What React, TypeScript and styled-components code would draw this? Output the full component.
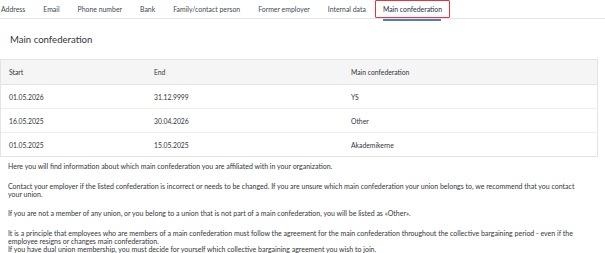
import { createGlobalStyle } from 'styled-components';
import styled from 'styled-components';

const GlobalStyle = createGlobalStyle`
  html, body {
    margin: 0;
    padding: 0;
    background: #ffffff;
  }
  body {
    font-family: Lato, "Open Sans", Arial, sans-serif;
    color: #32363a;
  }
`;

interface IPeriod {
  start: string;
  end: string;
  confederation: string;
}

const tabs = [
  'Address',
  'Email',
  'Phone number',
  'Bank',
  'Family/contact person',
  'Former employer',
  'Internal data',
  'Main confederation',
];

const periods: IPeriod[] = [
  { start: '01.05.2026', end: '31.12.9999', confederation: 'YS' },
  { start: '16.05.2025', end: '30.04.2026', confederation: 'Other' },
  { start: '01.05.2025', end: '15.05.2025', confederation: 'Akademikerne' },
];

export default function App() {
  return (
    <SPage>
      <GlobalStyle />
      <STabBar>
        {tabs.map((tab) => (
          <STab key={tab} $active={tab === 'Main confederation'}>
            {tab}
          </STab>
        ))}
      </STabBar>
      <STitle>Main confederation</STitle>
      <STable>
        <SHeadRow>
          <SCell>Start</SCell>
          <SCell>End</SCell>
          <SCell>Main confederation</SCell>
        </SHeadRow>
        {periods.map((p) => (
          <SRow key={p.start}>
            <SCell>{p.start}</SCell>
            <SCell>{p.end}</SCell>
            <SCell>{p.confederation}</SCell>
          </SRow>
        ))}
      </STable>
      <SInfo>
        <p>Here you will find information about which main confederation you are affiliated with in your organization.</p>
        <p>
          Contact your employer if the listed confederation is incorrect or needs to be changed. If you are unsure which
          main confederation your union belongs to, we recommend that you contact your union.
        </p>
        <p>
          If you are not a member of any union, or you belong to a union that is not part of a main confederation, you
          will be listed as «Other».
        </p>
        <p>
          It is a principle that employees who are members of a main confederation must follow the agreement for the
          main confederation throughout the collective bargaining period - even if the employee resigns or changes main
          confederation.
          <br />
          If you have dual union membership, you must decide for yourself which collective bargaining agreement you
          wish to join.
        </p>
      </SInfo>
    </SPage>
  );
}

const SPage = styled.div`
  width: 605px;
  height: 253px;
  overflow: hidden;
  display: flex;
  flex-direction: column;
`;

const STabBar = styled.div`
  display: flex;
  align-items: center;
  height: 22px;
  box-sizing: border-box;
  border-bottom: 1px solid #dde6ee;
`;

const STab = styled.div<{ $active?: boolean }>`
  position: relative;
  display: flex;
  align-items: center;
  height: 18px;
  box-sizing: border-box;
  padding: 0 ${(p) => (p.$active ? '7px' : '8px')};
  font-size: 6.9px;
  white-space: nowrap;
  color: ${(p) => (p.$active ? '#1d2d3e' : '#3d4a57')};
  border: ${(p) => (p.$active ? '1px solid #e8323c' : '1px solid transparent')};
  border-radius: 1px;
  &:first-child {
    padding-left: 0;
  }
  &::after {
    content: '';
    display: ${(p) => (p.$active ? 'block' : 'none')};
    position: absolute;
    left: 7px;
    right: 8px;
    bottom: -4px;
    height: 2px;
    background: #5a7ea3;
  }
`;

const STitle = styled.div`
  padding: 15px 0 0 10px;
  height: 18px;
  font-size: 9.6px;
  color: #32363a;
`;

const STable = styled.div`
  margin: 14px 7px 0 0;
  border: 1px solid #e4e4e4;
  display: flex;
  flex-direction: column;
`;

const SHeadRow = styled.div`
  display: grid;
  grid-template-columns: 145px 197px 1fr;
  height: 24px;
  align-items: center;
  background: #f5f5f5;
  border-bottom: 1px solid #e4e4e4;
  font-size: 6.8px;
  color: #32363a;
`;

const SRow = styled.div`
  display: grid;
  grid-template-columns: 145px 197px 1fr;
  height: 23px;
  align-items: center;
  border-bottom: 1px solid #eeeeee;
  font-size: 6.8px;
  color: #32363a;
  &:last-child {
    border-bottom: none;
  }
`;

const SCell = styled.div`
  padding-left: 8px;
  white-space: nowrap;
`;

const SInfo = styled.div`
  padding: 5px 26px 0 8px;
  font-size: 7px;
  line-height: 8px;
  color: #32363a;
  p {
    margin: 0 0 11.5px 0;
  }
`;
